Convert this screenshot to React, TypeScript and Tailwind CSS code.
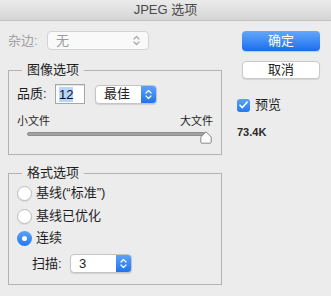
import React from 'react';

const font = "font-['Liberation_Sans','Noto_Sans_CJK_SC',sans-serif]";

const Chevrons: React.FC<{ color: string }> = ({ color }) => (
  <svg width="7" height="11" viewBox="0 0 7 11" fill="none">
    <path d="M1 4 L3.5 1.5 L6 4" stroke={color} strokeWidth="1.2" strokeLinecap="round" strokeLinejoin="round" />
    <path d="M1 7 L3.5 9.5 L6 7" stroke={color} strokeWidth="1.2" strokeLinecap="round" strokeLinejoin="round" />
  </svg>
);

const BlueSelect: React.FC<{ value: string; width: string }> = ({ value, width }) => (
  <div className={`${width} h-[19px] flex rounded-[4px] border border-[#c4c4c4] bg-white shadow-[0_1px_1px_rgba(0,0,0,0.12)] overflow-hidden`}>
    <div className="flex-1 flex items-center pl-[8px] text-[13px] text-[#222]">{value}</div>
    <div className="w-[15px] flex items-center justify-center bg-gradient-to-b from-[#5aa2f8] to-[#1f73ee]">
      <Chevrons color="#ffffff" />
    </div>
  </div>
);

const Radio: React.FC<{ label: string; checked?: boolean }> = ({ label, checked }) => (
  <div className="flex items-center h-[16px]">
    {checked ? (
      <div className="w-[15px] h-[15px] rounded-full bg-gradient-to-b from-[#5aa2f8] to-[#2478ef] flex items-center justify-center">
        <div className="w-[5px] h-[5px] rounded-full bg-white" />
      </div>
    ) : (
      <div className="w-[15px] h-[15px] rounded-full bg-white border border-[#bdbdbd] shadow-[0_1px_1px_rgba(0,0,0,0.08)]" />
    )}
    <span className="ml-[4px] text-[13px] text-[#1e1e1e]">{label}</span>
  </div>
);

export default function App() {
  return (
    <div className={`w-[331px] h-[296px] bg-[#ececec] flex flex-col ${font}`}>
      <div className="h-[21px] flex items-center justify-center bg-gradient-to-b from-[#ebebeb] to-[#d5d5d5] border-b border-[#c2c2c2] text-[13px] text-[#4a4a4a]">
        JPEG 选项
      </div>

      <div className="flex">
        <div className="w-[222px] pl-[8px]">
          <div className="mt-[10px] flex items-center h-[19px]">
            <span className="w-[39px] text-[13px] text-[#a3a3a3]">杂边:</span>
            <div className="w-[102px] h-[19px] flex items-center justify-between rounded-[4px] border border-[#d3d3d3] bg-[#f9f9f9] px-[8px] text-[13px] text-[#9c9c9c]">
              <span>无</span>
              <Chevrons color="#a8a8a8" />
            </div>
          </div>

          <fieldset className="mt-[12px] border border-[#b3b3b3] pl-[8px] pr-[8px] pb-[9px]">
            <legend className="ml-[5px] px-[5px] text-[13px] leading-[16px] text-[#1e1e1e]">图像选项</legend>
            <div className="mt-[6px] flex items-center h-[20px]">
              <span className="w-[38px] text-[13px] text-[#1e1e1e]">品质:</span>
              <div className="w-[30px] h-[20px] border border-[#a7a7a7] bg-white flex items-center pl-[3px] shadow-[inset_0_1px_1px_rgba(0,0,0,0.12)]">
                <span className="bg-[#b4d5fe] text-[13px] leading-[15px] text-[#111]">12</span>
              </div>
              <div className="ml-[10px]">
                <BlueSelect value="最佳" width="w-[62px]" />
              </div>
            </div>
            <div className="mt-[10px] flex justify-between text-[11px] leading-[14px] text-[#1e1e1e]">
              <span>小文件</span>
              <span>大文件</span>
            </div>
            <div className="relative mt-[2px] h-[15px] ml-[10px] w-[185px]">
              <div className="absolute left-0 right-[6px] top-[2px] h-[4px] rounded-full bg-[#a2a2a2] border border-[#8e8e8e]" />
              <svg className="absolute right-0 top-[1px]" width="12" height="13" viewBox="0 0 12 13">
                <path d="M6 0.8 L11.2 6 L11.2 11 Q11.2 12.2 10 12.2 L2 12.2 Q0.8 12.2 0.8 11 L0.8 6 Z" fill="#fbfbfb" stroke="#8a8a8a" strokeWidth="1" />
              </svg>
            </div>
          </fieldset>

          <fieldset className="mt-[10px] border border-[#b3b3b3] pl-[8px] pb-[10px]">
            <legend className="ml-[5px] px-[5px] text-[13px] leading-[16px] text-[#1e1e1e]">格式选项</legend>
            <div className="mt-[4px]">
              <Radio label="基线(“标准”)" />
            </div>
            <div className="mt-[7px]">
              <Radio label="基线已优化" />
            </div>
            <div className="mt-[6px]">
              <Radio label="连续" checked />
            </div>
            <div className="mt-[8px] flex items-center pl-[15px]">
              <span className="w-[38px] text-[13px] text-[#1e1e1e]">扫描:</span>
              <BlueSelect value="3" width="w-[62px]" />
            </div>
          </fieldset>
        </div>

        <div className="ml-[20px] w-[78px] flex flex-col">
          <div className="mt-[10px] h-[20px] rounded-[4px] bg-gradient-to-b from-[#62a8f9] to-[#1a6cee] flex items-center justify-center text-[13px] text-white shadow-[0_1px_1px_rgba(0,0,0,0.15)]">
            确定
          </div>
          <div className="mt-[10px] h-[18px] rounded-[4px] bg-white border border-[#c9c9c9] flex items-center justify-center text-[13px] text-[#1e1e1e] shadow-[0_1px_1px_rgba(0,0,0,0.1)]">
            取消
          </div>
          <div className="mt-[19px] -ml-[5px] flex items-center h-[14px]">
            <div className="w-[13px] h-[13px] rounded-[3px] bg-gradient-to-b from-[#5aa2f8] to-[#2478ef] flex items-center justify-center">
              <svg width="9" height="8" viewBox="0 0 9 8" fill="none">
                <path d="M1 4.2 L3.4 6.6 L8 1.2" stroke="#fff" strokeWidth="1.6" strokeLinecap="round" strokeLinejoin="round" />
              </svg>
            </div>
            <span className="ml-[5px] text-[13px] text-[#1e1e1e]">预览</span>
          </div>
          <div className="mt-[12px] -ml-[5px] text-[11px] font-bold text-[#2a2a2a]">73.4K</div>
        </div>
      </div>
    </div>
  );
}
